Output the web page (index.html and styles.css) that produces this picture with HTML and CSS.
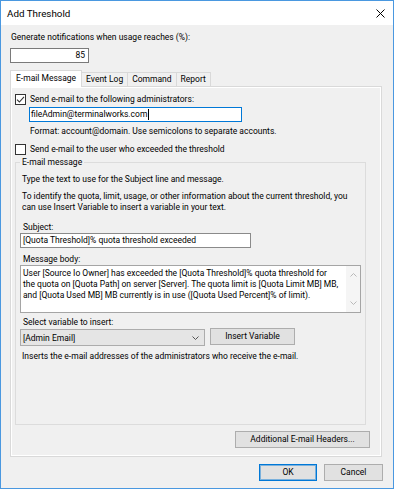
FILE: index.html
```html
<!DOCTYPE html>
<html>
<head>
<meta charset="UTF-8">
<title>Add Threshold</title>
<link rel="stylesheet" href="styles.css">
</head>
<body>
  <div class="window">
    <div class="titlebar">
      <span class="title">Add Threshold</span>
      <svg class="close" width="9" height="9" viewBox="0 0 9 9">
        <path d="M0.5 0.5 L8.5 8.5 M8.5 0.5 L0.5 8.5" stroke="#000" stroke-width="1" fill="none"/>
      </svg>
    </div>
    <div class="content">
      <div class="caption">Generate notifications when usage reaches (%):</div>
      <div class="field num">85</div>

      <div class="tabs">
        <div class="tab active">E-mail Message</div>
        <div class="tab">Event Log</div>
        <div class="tab">Command</div>
        <div class="tab">Report</div>
      </div>

      <div class="panel">
        <div class="check">
          <span class="box">
            <svg width="9" height="9" viewBox="0 0 9 9"><path d="M1 4.6 L3.4 7 L8 1.8" stroke="#333" stroke-width="1.1" fill="none"/></svg>
          </span>
          Send e-mail to the following administrators:
        </div>
        <div class="field email">fileAdmin@terminalworks.com<span class="caret"></span></div>
        <div class="hint">Format: account@domain. Use semicolons to separate accounts.</div>
        <div class="check second">
          <span class="box"></span>
          Send e-mail to the user who exceeded the threshold
        </div>

        <fieldset class="group">
          <legend>E-mail message</legend>
          <div class="gtext">Type the text to use for the Subject line and message.</div>
          <div class="gpara">To identify the quota, limit, usage, or other information about the current threshold, you<br>can use Insert Variable to insert a variable in your text.</div>

          <div class="flabel first">Subject:</div>
          <div class="field subject">[Quota Threshold]% quota threshold exceeded</div>

          <div class="flabel">Message body:</div>
          <div class="memo">
            <div class="memo-text">User [Source Io Owner] has exceeded the [Quota Threshold]% quota threshold for<br>the quota on [Quota Path] on server [Server]. The quota limit is [Quota Limit MB] MB,<br>and [Quota Used MB] MB currently is in use ([Quota Used Percent]% of limit).</div>
            <div class="scroll">
              <svg width="7" height="4" viewBox="0 0 7 4"><path d="M0.5 3.5 L3.5 0.5 L6.5 3.5" stroke="#b9b9b9" fill="none"/></svg>
              <svg width="7" height="4" viewBox="0 0 7 4"><path d="M0.5 0.5 L3.5 3.5 L6.5 0.5" stroke="#b9b9b9" fill="none"/></svg>
            </div>
          </div>

          <div class="flabel sel-label">Select variable to insert:</div>
          <div class="select-row">
            <div class="combo">
              <span>[Admin Email]</span>
              <svg width="7" height="4" viewBox="0 0 7 4"><path d="M0.5 0.5 L3.5 3.5 L6.5 0.5" stroke="#555" fill="none"/></svg>
            </div>
            <div class="btn insert">Insert Variable</div>
          </div>
          <div class="gtext inserts">Inserts the e-mail addresses of the administrators who receive the e-mail.</div>
        </fieldset>

        <div class="headers-row">
          <div class="btn headers">Additional E-mail Headers...</div>
        </div>
      </div>

      <div class="footer">
        <div class="btn ok">OK</div>
        <div class="btn cancel">Cancel</div>
      </div>
    </div>
  </div>
</body>
</html>
```

FILE: styles.css
```css
* {
  box-sizing: border-box;
}
body {
  margin: 0;
  font-family: Roboto, "Liberation Sans", Arial, sans-serif;
  font-size: 8.5px;
  color: #000;
  background: #fff;
}
.window {
  width: 394px;
  height: 489px;
  border: 1px solid #4a98e0;
  background: #f0f0f0;
}
.titlebar {
  height: 24px;
  background: #fff;
  display: flex;
  align-items: center;
  justify-content: space-between;
  padding: 0 8px 0 6px;
}
.title {
  font-size: 9.8px;
}
.content {
  padding: 5px 11px 0 9px;
}
.caption {
  line-height: 14px;
  margin-left: 1px;
}
.field {
  background: #fff;
  border: 1px solid #7a7a7a;
  height: 15px;
  line-height: 13px;
  padding: 0 2px;
  white-space: nowrap;
}
.num {
  width: 79px;
  margin-top: 4px;
  text-align: right;
  padding-right: 3px;
}

/* tabs */
.tabs {
  display: flex;
  align-items: flex-end;
  height: 16px;
  margin-top: 7px;
  position: relative;
  z-index: 1;
}
.tab {
  height: 14px;
  line-height: 13px;
  padding: 0 4px;
  border: 1px solid #d9d9d9;
  border-bottom: none;
  background: #f0f0f0;
  margin-left: -1px;
}
.tab.active {
  height: 17px;
  margin-left: 0;
  margin-bottom: -1px;
  padding: 1px 5px 0;
  background: #fff;
}
.panel {
  height: 371px;
  border: 1px solid #d9d9d9;
  box-shadow: inset 0 0 0 1px #fff;
  padding: 6px 0 0 4px;
}

/* checkboxes */
.check {
  display: flex;
  align-items: center;
  height: 13px;
  line-height: 13px;
}
.check.second {
  margin-top: 5px;
}
.box {
  width: 11px;
  height: 11px;
  border: 1px solid #333;
  background: #fff;
  margin-right: 4px;
  display: flex;
  align-items: center;
  justify-content: center;
}
.email {
  width: 213px;
  margin: 1px 0 0 14px;
  border-color: #0078d7;
  padding-left: 1px;
  display: flex;
  align-items: center;
}
.caret {
  width: 1px;
  height: 11px;
  background: #000;
  margin-left: 1px;
}
.hint {
  line-height: 13px;
  margin: 3px 0 0 15px;
}

/* group box */
.group {
  margin: 0;
  width: 351px;
  height: 269px;
  border: 1px solid #dcdcdc;
  padding: 0 0 0 4px;
  min-width: 0;
}
.group legend {
  padding: 0 2px;
  line-height: 13px;
}
.gtext {
  line-height: 13px;
  margin: 4px 0 0 2px;
}
.gpara {
  line-height: 10.5px;
  margin: 5px 0 0 2px;
}
.flabel {
  line-height: 12px;
  margin: 5px 0 0 3px;
}
.flabel.first {
  margin-top: 9px;
}
.flabel.sel-label {
  margin-top: 3px;
}
.subject {
  width: 231px;
  border-color: #8a8a8a;
}
.memo {
  width: 341px;
  height: 48px;
  background: #fff;
  border: 1px solid #a5a5a5;
  display: flex;
}
.memo-text {
  flex: 1;
  padding: 2px 0 0 2px;
  line-height: 10.8px;
  white-space: nowrap;
}
.scroll {
  width: 14px;
  background: #f5f5f5;
  display: flex;
  flex-direction: column;
  justify-content: space-between;
  align-items: center;
  padding: 7px 0 7px;
}
.select-row {
  display: flex;
  align-items: flex-start;
  height: 17px;
}
.combo {
  width: 185px;
  height: 17px;
  margin-top: 1px;
  background: #e5e5e5;
  border: 1px solid #acacac;
  display: flex;
  align-items: center;
  justify-content: space-between;
  padding: 0 5px 0 2px;
}
.btn {
  height: 17px;
  line-height: 15px;
  text-align: center;
  background: #e1e1e1;
  border: 1px solid #adadad;
}
.insert {
  width: 85px;
  margin-left: 5px;
}
.inserts {
  line-height: 12px;
  margin-top: 5px;
}
.headers-row {
  display: flex;
  justify-content: flex-end;
  margin-top: 6px;
  padding-right: 11px;
}
.headers {
  width: 135px;
}

/* dialog buttons */
.footer {
  display: flex;
  justify-content: flex-end;
  gap: 7px;
  margin-top: 7px;
  margin-right: -1px;
}
.ok {
  width: 58px;
  border-color: #0078d7;
  box-shadow: inset 0 0 0 1px rgba(0, 120, 215, 0.45);
}
.cancel {
  width: 59px;
}
```
